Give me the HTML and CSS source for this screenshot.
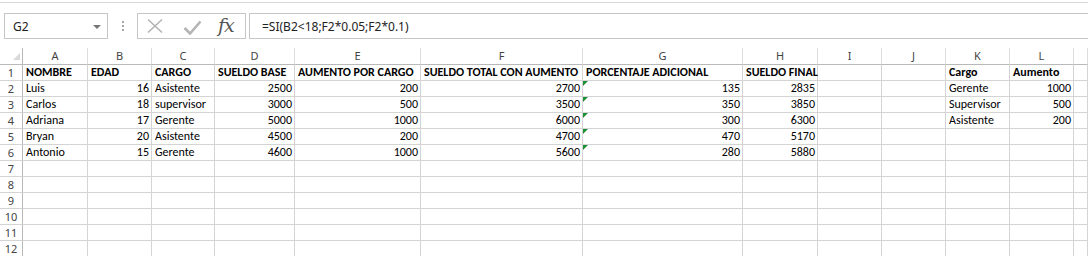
FILE: index.html
```html
<!DOCTYPE html>
<html lang="es">
<head>
  <meta charset="UTF-8" />
  <title>Libro1 - Excel</title>
  <link rel="stylesheet" href="styles.css">
</head>
<body>
  <div class="app">
    <div class="formula-bar">
      <div class="name-box">
        <span class="cell-ref">G2</span>
        <span class="caret"></span>
      </div>
      <div class="grip"><i></i><i></i><i></i></div>
      <div class="fn-buttons">
        <svg class="fn-icon cancel" width="18" height="16" viewBox="0 0 18 16">
          <path d="M2 1.5 L16 14.5 M16 1.5 L2 14.5" stroke="#b4b4b4" stroke-width="1.6" fill="none" />
        </svg>
        <svg class="fn-icon enter" width="19" height="15" viewBox="0 0 19 15">
          <path d="M1.5 8 L7 13.5 L17.5 1.5" stroke="#b4b4b4" stroke-width="2.6" fill="none" />
        </svg>
        <span class="fx">fx</span>
      </div>
      <div class="formula-input">=SI(B2&lt;18;F2*0.05;F2*0.1)</div>
    </div>

    <div class="sheet">
      <div class="row head">
        <div class="corner"><span></span></div>
        <div>A</div><div>B</div><div>C</div><div>D</div><div>E</div><div>F</div>
        <div>G</div><div>H</div><div>I</div><div>J</div><div>K</div><div>L</div><div></div>
      </div>
      <div class="row">
        <div class="num">1</div>
        <div class="b">NOMBRE</div><div class="b">EDAD</div><div class="b">CARGO</div>
        <div class="b">SUELDO BASE</div><div class="b">AUMENTO POR CARGO</div>
        <div class="b">SUELDO TOTAL CON AUMENTO</div><div class="b">PORCENTAJE ADICIONAL</div>
        <div class="b">SUELDO FINAL</div><div></div><div></div>
        <div class="b">Cargo</div><div class="b">Aumento</div><div></div>
      </div>
      <div class="row">
        <div class="num">2</div>
        <div>Luis</div><div class="r">16</div><div>Asistente</div><div class="r">2500</div>
        <div class="r">200</div><div class="r">2700</div><div class="r flag">135</div><div class="r">2835</div>
        <div></div><div></div><div>Gerente</div><div class="r">1000</div><div></div>
      </div>
      <div class="row">
        <div class="num">3</div>
        <div>Carlos</div><div class="r">18</div><div>supervisor</div><div class="r">3000</div>
        <div class="r">500</div><div class="r">3500</div><div class="r flag">350</div><div class="r">3850</div>
        <div></div><div></div><div>Supervisor</div><div class="r">500</div><div></div>
      </div>
      <div class="row">
        <div class="num">4</div>
        <div>Adriana</div><div class="r">17</div><div>Gerente</div><div class="r">5000</div>
        <div class="r">1000</div><div class="r">6000</div><div class="r flag">300</div><div class="r">6300</div>
        <div></div><div></div><div>Asistente</div><div class="r">200</div><div></div>
      </div>
      <div class="row">
        <div class="num">5</div>
        <div>Bryan</div><div class="r">20</div><div>Asistente</div><div class="r">4500</div>
        <div class="r">200</div><div class="r">4700</div><div class="r flag">470</div><div class="r">5170</div>
        <div></div><div></div><div></div><div></div><div></div>
      </div>
      <div class="row">
        <div class="num">6</div>
        <div>Antonio</div><div class="r">15</div><div>Gerente</div><div class="r">4600</div>
        <div class="r">1000</div><div class="r">5600</div><div class="r flag">280</div><div class="r">5880</div>
        <div></div><div></div><div></div><div></div><div></div>
      </div>
      <div class="row">
        <div class="num">7</div>
        <div></div><div></div><div></div><div></div><div></div><div></div><div></div>
        <div></div><div></div><div></div><div></div><div></div><div></div>
      </div>
      <div class="row">
        <div class="num">8</div>
        <div></div><div></div><div></div><div></div><div></div><div></div><div></div>
        <div></div><div></div><div></div><div></div><div></div><div></div>
      </div>
      <div class="row">
        <div class="num">9</div>
        <div></div><div></div><div></div><div></div><div></div><div></div><div></div>
        <div></div><div></div><div></div><div></div><div></div><div></div>
      </div>
      <div class="row">
        <div class="num">10</div>
        <div></div><div></div><div></div><div></div><div></div><div></div><div></div>
        <div></div><div></div><div></div><div></div><div></div><div></div>
      </div>
      <div class="row">
        <div class="num">11</div>
        <div></div><div></div><div></div><div></div><div></div><div></div><div></div>
        <div></div><div></div><div></div><div></div><div></div><div></div>
      </div>
      <div class="row">
        <div class="num">12</div>
        <div></div><div></div><div></div><div></div><div></div><div></div><div></div>
        <div></div><div></div><div></div><div></div><div></div><div></div>
      </div>
    </div>
  </div>
</body>
</html>
```

FILE: styles.css
```css
:root {
  --grid: #d4d4d4;
  --frame: #c6c6c6;
  --head-text: #444;
  --cell-text: #000;
  --flag: #1e8f34;
}
html, body {
  margin: 0;
  background: #fff;
  overflow: hidden;
}
.app {
  margin-top: 2px;
  border-top: 1px solid #d9d9d9;
  width: 1088px;
}
.formula-bar {
  display: flex;
  align-items: stretch;
  padding-top: 10px;
  height: 26px;
  font-family: "Noto Sans", "Open Sans", sans-serif;
}
.name-box {
  margin-left: 4px;
  width: 104px;
  box-sizing: border-box;
  border: 1px solid var(--frame);
  display: flex;
  align-items: center;
  justify-content: space-between;
  padding: 0 6px 0 8px;
  font-size: 12px;
  color: #222;
}
.caret {
  width: 0;
  height: 0;
  border-left: 4px solid transparent;
  border-right: 4px solid transparent;
  border-top: 4px solid #777;
  margin-top: 1px;
}
.grip {
  width: 29px;
  display: flex;
  flex-direction: column;
  align-items: center;
  justify-content: center;
  gap: 2px;
}
.grip i {
  width: 2px;
  height: 2px;
  background: #a6a6a6;
}
.fn-buttons {
  width: 109px;
  box-sizing: border-box;
  border: 1px solid var(--frame);
  display: flex;
  align-items: center;
  padding-left: 8px;
}
.fn-icon {
  display: block;
}
.fn-icon.enter {
  margin-left: 19px;
  margin-top: 2px;
}
.fx {
  font-family: "DejaVu Serif", "Liberation Serif", serif;
  font-style: italic;
  font-size: 19px;
  line-height: 22px;
  color: #555;
  margin-left: 16px;
  margin-top: -2px;
  letter-spacing: -1px;
}
.formula-input {
  flex: 1;
  margin-left: 3px;
  border: 1px solid var(--frame);
  border-right: none;
  display: flex;
  align-items: center;
  padding-left: 12px;
  font-size: 12px;
  color: #222;
}
.sheet {
  margin-top: 9px;
  font-family: "Carlito", "Lato", sans-serif;
  font-size: 12px;
  color: var(--cell-text);
}
.row {
  display: grid;
  grid-template-columns: 23px 65px 64px 63px 80px 126px 162px 160px 75px 64px 64px 64px 64px 1fr;
  height: 16px;
}
.row > div {
  box-sizing: border-box;
  border-right: 1px solid var(--grid);
  border-bottom: 1px solid var(--grid);
  padding: 0 2px 0 3px;
  line-height: 15px;
  white-space: nowrap;
  overflow: visible;
  position: relative;
}
.row.head {
  height: 17px;
}
.row.head > div {
  font-family: "Noto Sans", "Open Sans", sans-serif;
  font-size: 11px;
  color: var(--head-text);
  text-align: center;
  line-height: 16px;
  border-right-color: #dcdcdc;
  border-bottom-color: #b9b9b9;
  padding: 0;
}
.row > .num,
.row.head > .corner {
  font-family: "Noto Sans", "Open Sans", sans-serif;
  font-size: 11px;
  color: var(--head-text);
  text-align: center;
  padding: 0;
  border-right-color: #b9b9b9;
}
.corner span {
  position: absolute;
  left: 13px;
  top: 5px;
  width: 0;
  height: 0;
  border-left: 7px solid transparent;
  border-bottom: 7px solid #d9d9d9;
}
.b {
  font-weight: 700;
}
.r {
  text-align: right;
}
.flag::before {
  content: "";
  position: absolute;
  left: 0;
  top: 0;
  width: 0;
  height: 0;
  border-top: 5px solid var(--flag);
  border-right: 5px solid transparent;
}
```
